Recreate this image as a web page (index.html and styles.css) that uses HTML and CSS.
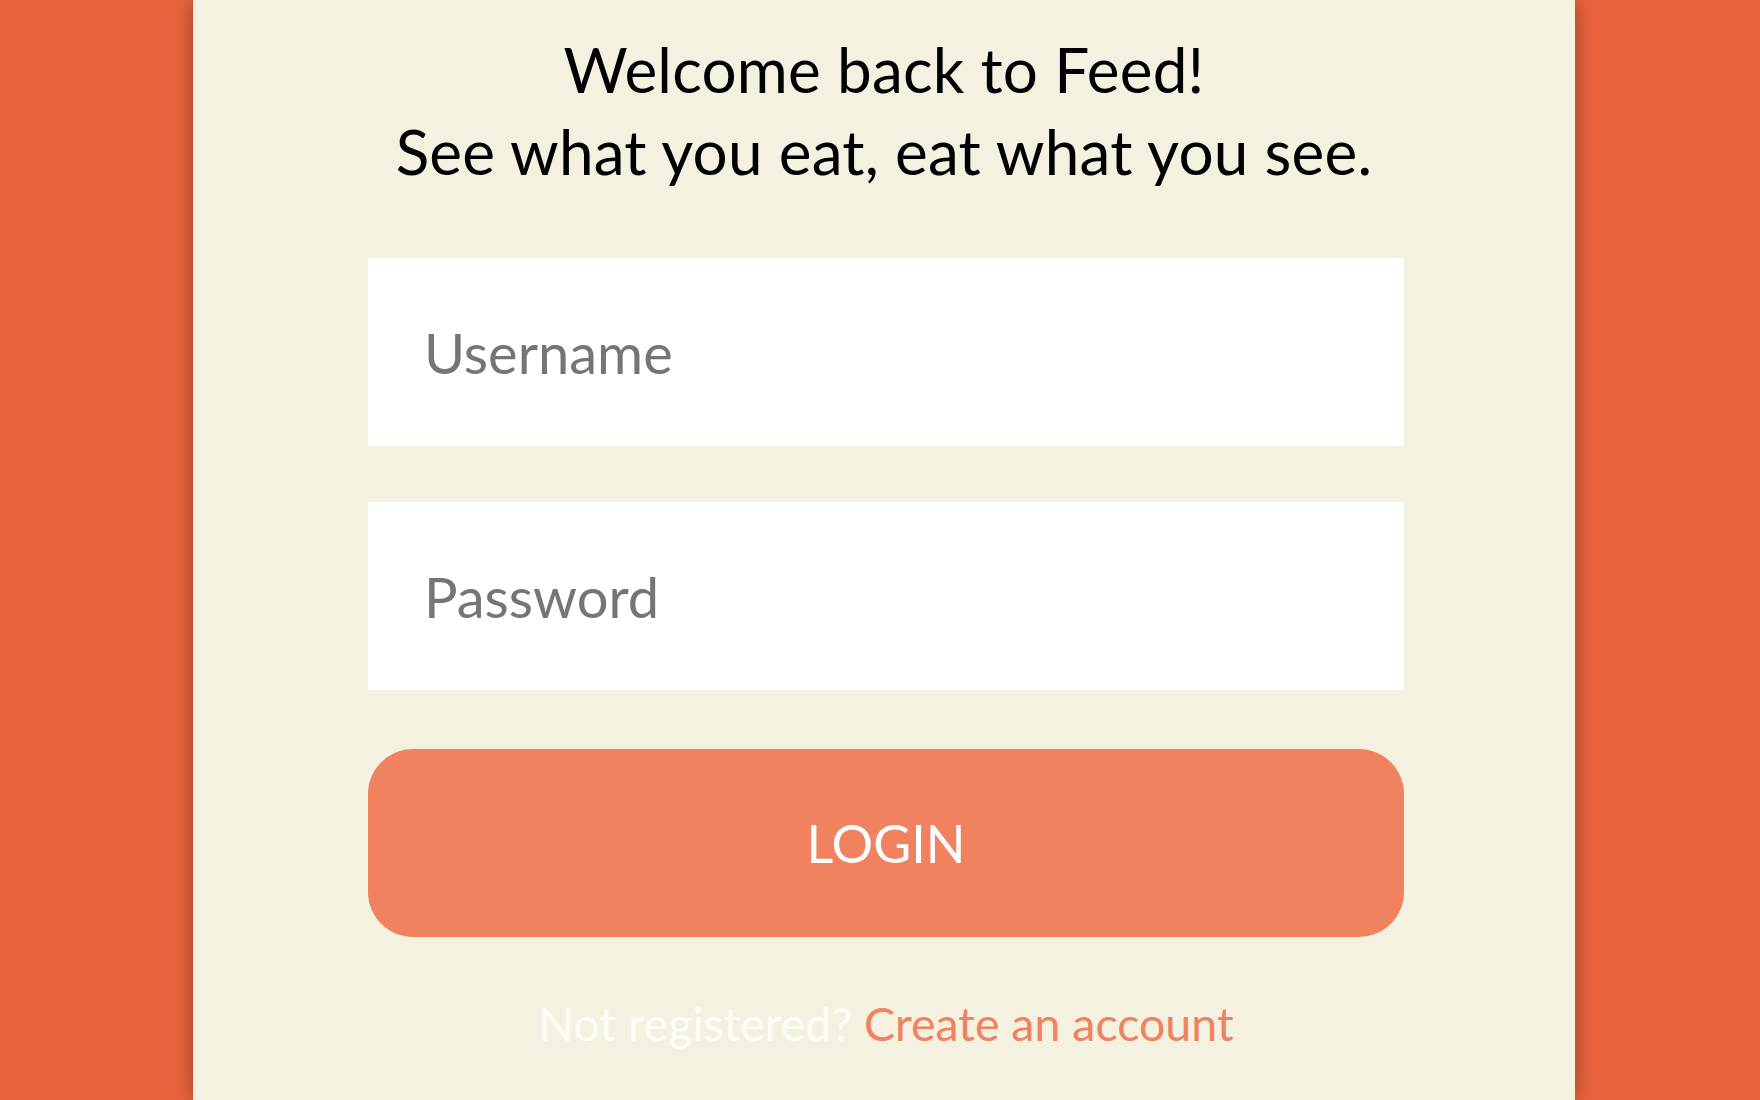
FILE: index.html
```html
<!DOCTYPE html>
<html lang="en">
<head>
<meta charset="utf-8">
<title>Feed - Login</title>
<link rel="stylesheet" href="styles.css">
</head>
<body>
<div class="page">
  <main class="card">
    <h1 class="welcome">Welcome back to Feed!<br>See what you eat, eat what you see.</h1>
    <form class="login-form">
      <input class="field" type="text" placeholder="Username">
      <input class="field" type="password" placeholder="Password">
      <button class="login-btn" type="button">LOGIN</button>
      <p class="register">Not registered? <a class="register-link" href="#">Create an account</a></p>
    </form>
  </main>
</div>
</body>
</html>
```

FILE: styles.css
```css
html, body {
  margin: 0;
  padding: 0;
  height: 100%;
}
body {
  background: #e9653d;
  font-family: Lato, "Open Sans", sans-serif;
  overflow: hidden;
}
.page {
  display: flex;
  justify-content: center;
  padding-left: 8px;
  height: 100%;
}
.card {
  width: 1382px;
  height: 100%;
  background: #f5f1e1;
  box-shadow: 0 0 22px rgba(80, 20, 0, 0.45);
  display: flex;
  flex-direction: column;
  align-items: center;
}
.welcome {
  margin: 0;
  padding-top: 28px;
  font-weight: 400;
  font-size: 62px;
  line-height: 82px;
  letter-spacing: 0.2px;
  color: #000;
  text-align: center;
}
.login-form {
  display: flex;
  flex-direction: column;
  width: 1036px;
  margin-top: 66px;
  margin-left: 4px;
}
.field {
  box-sizing: border-box;
  height: 188px;
  border: none;
  outline: none;
  background: #fff;
  padding: 0 56px;
  font-family: inherit;
  font-size: 56px;
  color: #333;
  margin-bottom: 56px;
}
.field::placeholder {
  color: #757575;
}
.field + .field {
  margin-bottom: 59px;
}
.login-btn {
  height: 188px;
  border: none;
  border-radius: 45px;
  background: #f0825f;
  color: #fff;
  font-family: inherit;
  font-size: 52px;
  cursor: pointer;
}
.register {
  margin: 58px 0 0;
  text-align: center;
  font-size: 46.5px;
  color: #fdfcf5;
}
.register-link {
  color: #ef8260;
  text-decoration: none;
}
```
